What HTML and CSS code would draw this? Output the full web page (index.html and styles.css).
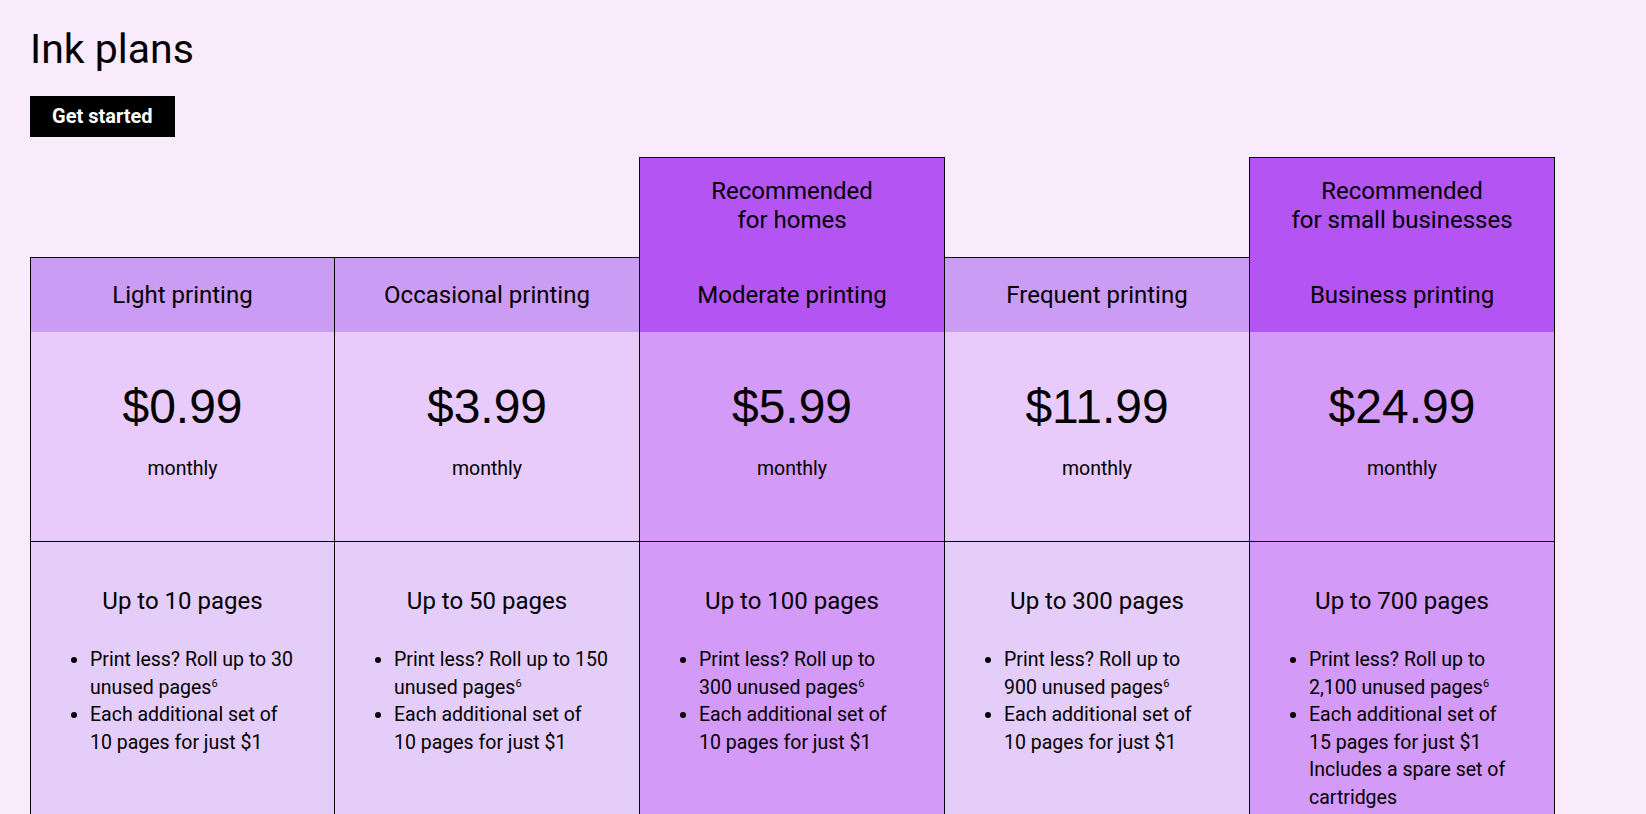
FILE: index.html
```html
<!DOCTYPE html>
<html lang="en">
<head>
<meta charset="utf-8">
<title>Ink plans</title>
<link rel="stylesheet" href="styles.css">
</head>
<body>
<main class="page">
  <h1 class="title">Ink plans</h1>
  <a class="cta" href="#">Get started</a>

  <div class="plans">
    <section class="plan">
      <div class="rec-slot"></div>
      <h2 class="plan-name">Light printing</h2>
      <div class="plan-price">
        <div class="amount">$0.99</div>
        <div class="period">monthly</div>
      </div>
      <div class="plan-features">
        <p class="pages">Up to 10 pages</p>
        <ul class="perks">
          <li>Print less? Roll up to 30 unused pages<sup>6</sup></li>
          <li>Each additional set of 10&nbsp;pages for just $1</li>
        </ul>
      </div>
    </section>

    <section class="plan">
      <div class="rec-slot"></div>
      <h2 class="plan-name">Occasional printing</h2>
      <div class="plan-price">
        <div class="amount">$3.99</div>
        <div class="period">monthly</div>
      </div>
      <div class="plan-features">
        <p class="pages">Up to 50 pages</p>
        <ul class="perks">
          <li>Print less? Roll up to 150 unused pages<sup>6</sup></li>
          <li>Each additional set of 10&nbsp;pages for just $1</li>
        </ul>
      </div>
    </section>

    <section class="plan plan--featured">
      <div class="rec rec--inner">Recommended<br>for homes</div>
      <h2 class="plan-name">Moderate printing</h2>
      <div class="plan-price">
        <div class="amount">$5.99</div>
        <div class="period">monthly</div>
      </div>
      <div class="plan-features">
        <p class="pages">Up to 100 pages</p>
        <ul class="perks">
          <li>Print less? Roll up to 300&nbsp;unused pages<sup>6</sup></li>
          <li>Each additional set of 10&nbsp;pages for just $1</li>
        </ul>
      </div>
    </section>

    <section class="plan">
      <div class="rec-slot"></div>
      <h2 class="plan-name">Frequent printing</h2>
      <div class="plan-price">
        <div class="amount">$11.99</div>
        <div class="period">monthly</div>
      </div>
      <div class="plan-features">
        <p class="pages">Up to 300 pages</p>
        <ul class="perks">
          <li>Print less? Roll up to 900&nbsp;unused pages<sup>6</sup></li>
          <li>Each additional set of 10&nbsp;pages for just $1</li>
        </ul>
      </div>
    </section>

    <section class="plan plan--featured">
      <div class="rec">Recommended<br>for small businesses</div>
      <h2 class="plan-name">Business printing</h2>
      <div class="plan-price">
        <div class="amount">$24.99</div>
        <div class="period">monthly</div>
      </div>
      <div class="plan-features">
        <p class="pages">Up to 700 pages</p>
        <ul class="perks">
          <li>Print less? Roll up to 2,100&nbsp;unused pages<sup>6</sup></li>
          <li>Each additional set of 15&nbsp;pages for just $1<br>Includes a spare set of cartridges</li>
        </ul>
      </div>
    </section>
  </div>
</main>
</body>
</html>
```

FILE: styles.css
```css
html {
  overflow: hidden;
}

body {
  margin: 0;
  background: #f9ebfc;
  color: #000;
  font-family: Roboto, "Liberation Sans", sans-serif;
}

.page {
  display: flex;
  flex-direction: column;
  align-items: flex-start;
  padding: 24px 30px 0;
}

.title {
  margin: 0;
  font-size: 41px;
  font-weight: 400;
  line-height: 50px;
}

.cta {
  margin-top: 22px;
  padding: 0 22px;
  background: #000;
  color: #fff;
  font-size: 20px;
  font-weight: 700;
  line-height: 41px;
  text-decoration: none;
}

.plans {
  display: grid;
  grid-template-columns: 304px repeat(3, 305px) 306px;
  margin-top: 20px;
}

.plan {
  display: flex;
  flex-direction: column;
}

.rec-slot {
  height: 100px;
}

.rec {
  box-sizing: border-box;
  height: 100px;
  padding-top: 19px;
  border: 1px solid #000;
  border-bottom: 0;
  background: #b455f3;
  text-align: center;
  font-size: 24px;
  line-height: 29px;
}

.rec--inner {
  margin-right: -1px;
}

.plan-name {
  box-sizing: border-box;
  height: 75px;
  margin: 0;
  display: flex;
  align-items: center;
  justify-content: center;
  border-left: 1px solid #000;
  border-top: 1px solid #000;
  background: #cb9cf3;
  font-size: 24px;
  font-weight: 400;
  line-height: 32px;
}

.plan-price {
  box-sizing: border-box;
  height: 209px;
  padding-top: 47px;
  border-left: 1px solid #000;
  background: #e8cbfa;
  text-align: center;
}

.amount {
  font-family: "Liberation Sans", Arial, sans-serif;
  font-size: 48px;
  line-height: 56px;
}

.period {
  margin-top: 20px;
  font-size: 19.5px;
  line-height: 28px;
}

.plan-features {
  min-height: 420px;
  padding-top: 43px;
  border-left: 1px solid #000;
  border-top: 1px solid #000;
  background: #e5cdf9;
}

.pages {
  margin: 0;
  text-align: center;
  font-size: 24px;
  line-height: 32px;
}

.perks {
  margin: 29px 0 0;
  padding: 0 30px 0 59px;
  font-size: 19.5px;
  line-height: 27.5px;
}

.perks sup {
  font-size: 11px;
  line-height: 0;
  vertical-align: 7px;
}

.plan:last-child .plan-name,
.plan:last-child .plan-price,
.plan:last-child .plan-features {
  border-right: 1px solid #000;
}

.plan--featured .plan-name {
  border-top: 0;
  background: #b455f3;
}

.plan--featured .plan-price,
.plan--featured .plan-features {
  background: #d39af7;
}
```
